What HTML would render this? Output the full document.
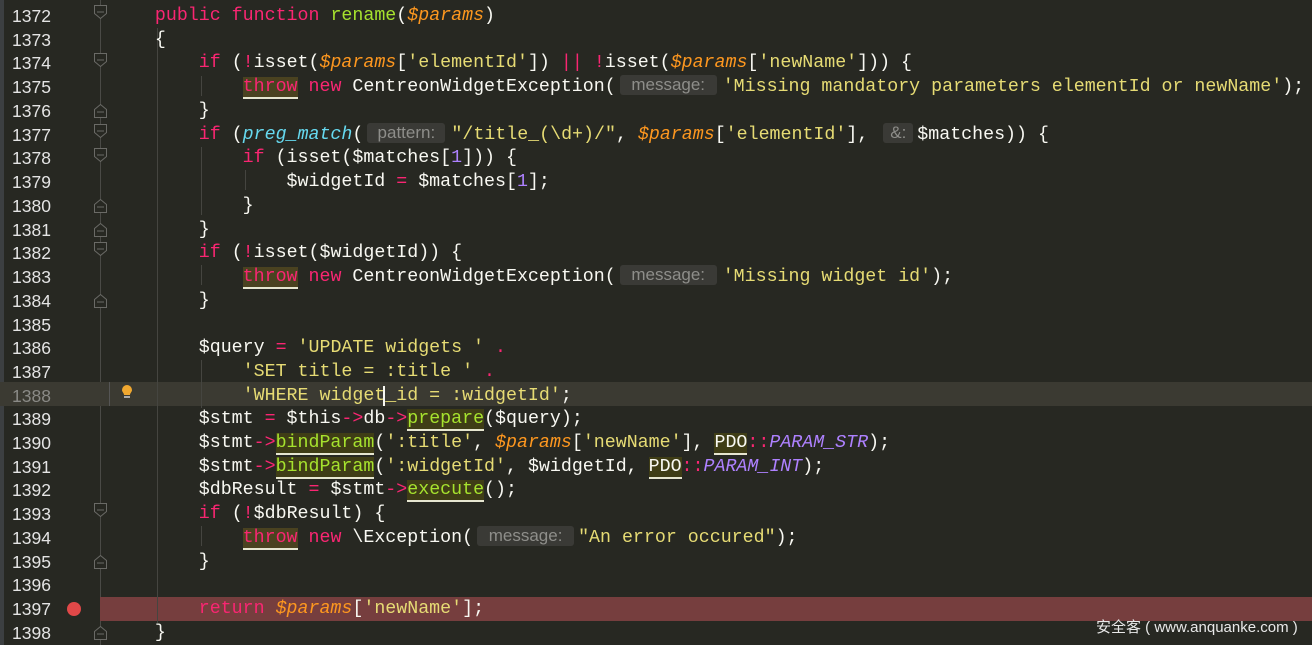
<!DOCTYPE html>
<html><head><meta charset="utf-8"><style>
body{margin:0;width:1312px;height:645px;background:#272822;overflow:hidden;position:relative;font-family:"Liberation Mono",monospace;}
.strip{position:absolute;left:0;top:0;width:4px;height:645px;background:#3c3f41}
.l{position:absolute;left:0;width:1312px;height:24px;line-height:24px;}
.n{position:absolute;left:12px;color:#e4e4e4;font-size:17.5px;font-family:"Liberation Sans",sans-serif;}
.c{position:absolute;left:111px;white-space:pre;color:#f8f8f2;font-size:18.3px;}
.k{color:#f92672}.f{color:#a6e22e}.s{color:#e6db74}.v{color:#fd971f;font-style:italic}.p{color:#66d9ef;font-style:italic}.g{color:#ae81ff;font-style:italic}.pu{color:#ae81ff}
.t{background:#4a4220;border-bottom:2px solid #e6e6d0;}
.u{background:#3f3d16;border-bottom:2px solid #e6e6d0;}
.h{display:inline-block;background:#3a3a36;color:#8e8e8a;font-family:"Liberation Sans",sans-serif;font-size:17px;line-height:20px;border-radius:3px;text-align:center;vertical-align:1px}
.vl{position:absolute;width:1px;background:#454540}
</style></head><body>
<div class="strip"></div>
<div class="vl" style="left:100px;top:0;height:645px;background:#4a4a46"></div>
<div class="l" style="top:382px;background:#3b3a32"></div>
<div class="l" style="top:597px;background:#763e3e;left:100px;width:1212px"></div>
<div class="vl" style="left:157px;top:28px;height:595px"></div>
<div class="vl" style="left:201px;top:76px;height:20px"></div>
<div class="vl" style="left:201px;top:147px;height:68px"></div>
<div class="vl" style="left:245px;top:170px;height:20px"></div>
<div class="vl" style="left:201px;top:265px;height:20px"></div>
<div class="vl" style="left:201px;top:360px;height:48px"></div>
<div class="vl" style="left:201px;top:526px;height:20px"></div>
<div class="vl" style="left:109px;top:382px;height:24px;background:#555"></div>
<svg style="position:absolute;left:0;top:0" width="160" height="645">
<g fill="#272822" stroke="#6a6a66" stroke-width="1">
<path d="M94.5 5.5h12v8l-6 5l-6-5z"/><path d="M94.5 53.5h12v8l-6 5l-6-5z"/><path d="M94.5 124.5h12v8l-6 5l-6-5z"/><path d="M94.5 148.5h12v8l-6 5l-6-5z"/><path d="M94.5 242.5h12v8l-6 5l-6-5z"/><path d="M94.5 503.5h12v8l-6 5l-6-5z"/>
<path d="M94.5 117.5h12v-8l-6-5l-6 5z"/><path d="M94.5 212.5h12v-8l-6-5l-6 5z"/><path d="M94.5 236.5h12v-8l-6-5l-6 5z"/><path d="M94.5 307.5h12v-8l-6-5l-6 5z"/><path d="M94.5 568.5h12v-8l-6-5l-6 5z"/><path d="M94.5 639.5h12v-8l-6-5l-6 5z"/>
</g>
<g stroke="#6a6a66"><path d="M97 12h7M97 60h7M97 131h7M97 155h7M97 249h7M97 510h7M97 112h7M97 207h7M97 231h7M97 302h7M97 563h7M97 634h7"/></g>
<circle cx="74" cy="609" r="7" fill="#e04848"/>
<path d="M122 390a5 5 0 1 1 10 0c0 2-2 3-2 5h-6c0-2-2-3-2-5z" fill="#f0a830"/><rect x="124" y="396" width="6" height="2" fill="#aaa"/>
</svg>
<div class="l" style="top:4px"><span class="n">1372</span><span class="c">    <span class="k">public function</span> <span class="f">rename</span>(<span class="v">$params</span>)</span></div>
<div class="l" style="top:28px"><span class="n">1373</span><span class="c">    {</span></div>
<div class="l" style="top:51px"><span class="n">1374</span><span class="c">        <span class="k">if</span> (<span class="k">!</span>isset(<span class="v">$params</span>[<span class="s">'elementId'</span>]) <span class="k">||</span> <span class="k">!</span>isset(<span class="v">$params</span>[<span class="s">'newName'</span>])) {</span></div>
<div class="l" style="top:75px"><span class="n">1375</span><span class="c">            <span class="k t">throw</span> <span class="k">new</span> CentreonWidgetException(<span class="h" style="width:97px;margin:0 6px 0 4px">message:</span><span class="s">'Missing mandatory parameters elementId or newName'</span>);</span></div>
<div class="l" style="top:99px"><span class="n">1376</span><span class="c">        }</span></div>
<div class="l" style="top:123px"><span class="n">1377</span><span class="c">        <span class="k">if</span> (<span class="p">preg_match</span>(<span class="h" style="width:78px;margin:0 6px 0 4px">pattern:</span><span class="s">"/title_(\d+)/"</span>, <span class="v">$params</span>[<span class="s">'elementId'</span>], <span class="h" style="width:30px;margin:0 4px 0 4px">&amp;:</span>$matches)) {</span></div>
<div class="l" style="top:146px"><span class="n">1378</span><span class="c">            <span class="k">if</span> (isset($matches[<span class="pu">1</span>])) {</span></div>
<div class="l" style="top:170px"><span class="n">1379</span><span class="c">                $widgetId <span class="k">=</span> $matches[<span class="pu">1</span>];</span></div>
<div class="l" style="top:194px"><span class="n">1380</span><span class="c">            }</span></div>
<div class="l" style="top:218px"><span class="n">1381</span><span class="c">        }</span></div>
<div class="l" style="top:241px"><span class="n">1382</span><span class="c">        <span class="k">if</span> (<span class="k">!</span>isset($widgetId)) {</span></div>
<div class="l" style="top:265px"><span class="n">1383</span><span class="c">            <span class="k t">throw</span> <span class="k">new</span> CentreonWidgetException(<span class="h" style="width:97px;margin:0 6px 0 4px">message:</span><span class="s">'Missing widget id'</span>);</span></div>
<div class="l" style="top:289px"><span class="n">1384</span><span class="c">        }</span></div>
<div class="l" style="top:313px"><span class="n">1385</span></div>
<div class="l" style="top:336px"><span class="n">1386</span><span class="c">        $query <span class="k">=</span> <span class="s">'UPDATE widgets '</span> <span class="k">.</span></span></div>
<div class="l" style="top:360px"><span class="n">1387</span><span class="c">            <span class="s">'SET title = :title '</span> <span class="k">.</span></span></div>
<div class="l" style="top:384px"><span class="n" style="color:#8a8a86">1388</span><span class="c">            <span class="s">'WHERE widget<span style="border-left:2px solid #f8f8f2;margin-left:-2px">_</span>id = :widgetId'</span>;</span></div>
<div class="l" style="top:407px"><span class="n">1389</span><span class="c">        $stmt <span class="k">=</span> $this<span class="k">-&gt;</span>db<span class="k">-&gt;</span><span class="f u">prepare</span>($query);</span></div>
<div class="l" style="top:431px"><span class="n">1390</span><span class="c">        $stmt<span class="k">-&gt;</span><span class="f u">bindParam</span>(<span class="s">':title'</span>, <span class="v">$params</span>[<span class="s">'newName'</span>], <span class="u">PDO</span><span class="k">::</span><span class="g">PARAM_STR</span>);</span></div>
<div class="l" style="top:455px"><span class="n">1391</span><span class="c">        $stmt<span class="k">-&gt;</span><span class="f u">bindParam</span>(<span class="s">':widgetId'</span>, $widgetId, <span class="u">PDO</span><span class="k">::</span><span class="g">PARAM_INT</span>);</span></div>
<div class="l" style="top:478px"><span class="n">1392</span><span class="c">        $dbResult <span class="k">=</span> $stmt<span class="k">-&gt;</span><span class="f u">execute</span>();</span></div>
<div class="l" style="top:502px"><span class="n">1393</span><span class="c">        <span class="k">if</span> (<span class="k">!</span>$dbResult) {</span></div>
<div class="l" style="top:526px"><span class="n">1394</span><span class="c">            <span class="k t">throw</span> <span class="k">new</span> \Exception(<span class="h" style="width:97px;margin:0 4px 0 4px">message:</span><span class="s">"An error occured"</span>);</span></div>
<div class="l" style="top:550px"><span class="n">1395</span><span class="c">        }</span></div>
<div class="l" style="top:573px"><span class="n">1396</span></div>
<div class="l" style="top:597px"><span class="n">1397</span><span class="c">        <span class="k">return</span> <span class="v">$params</span>[<span class="s">'newName'</span>];</span></div>
<div class="l" style="top:621px"><span class="n">1398</span><span class="c">    }</span></div>
<div style="position:absolute;left:1096px;top:616px;color:#e8e8e8;font-size:15px;font-family:'Liberation Sans','Noto Sans CJK SC',sans-serif;white-space:pre">安全客 ( www.anquanke.com )</div>
</body></html>
